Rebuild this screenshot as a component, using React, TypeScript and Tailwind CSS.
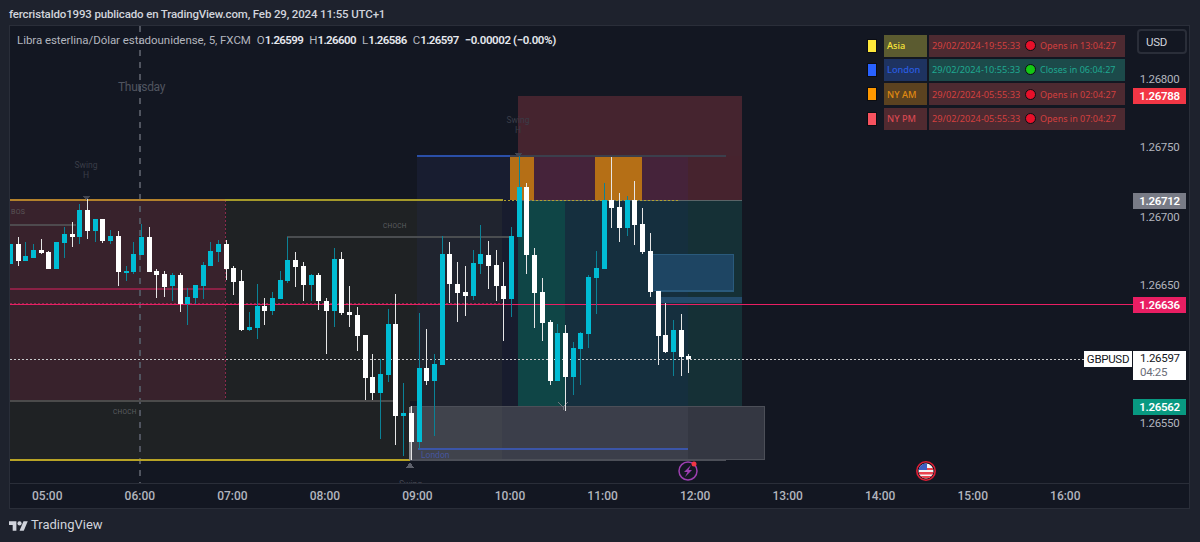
import React from "react"

type Candle = ["c" | "w", number, number, number, number]

// kind, wick top, body top, body bottom, wick bottom (page px)
const candles: Candle[] = [
  ["c", 244, 244, 264, 264], ["w", 237, 244, 261, 266], ["c", 242, 256, 261, 261], ["c", 244, 250, 258, 258],
  ["w", 239, 250, 253, 254], ["w", 251, 252, 269, 269], ["c", 242, 242, 269, 269], ["c", 227, 234, 243, 258],
  ["w", 222, 234, 237, 247], ["c", 204, 210, 237, 244], ["w", 199, 210, 231, 239], ["c", 219, 219, 231, 242],
  ["w", 219, 219, 241, 243], ["c", 230, 236, 241, 244], ["w", 231, 236, 272, 286], ["c", 266, 271, 273, 281],
  ["c", 242, 254, 272, 274], ["c", 224, 237, 255, 255], ["w", 227, 237, 272, 272], ["w", 269, 271, 275, 298],
  ["w", 271, 274, 287, 297], ["c", 273, 275, 286, 301], ["w", 273, 275, 304, 312], ["c", 288, 297, 304, 325],
  ["c", 285, 285, 298, 304], ["c", 262, 265, 286, 299], ["c", 242, 251, 266, 266], ["c", 240, 244, 252, 262],
  ["w", 240, 244, 269, 280], ["w", 266, 268, 282, 295], ["w", 270, 281, 330, 331], ["c", 312, 327, 330, 331],
  ["c", 284, 306, 328, 339], ["w", 298, 306, 311, 325], ["c", 292, 298, 311, 315], ["c", 271, 280, 299, 299],
  ["c", 237, 260, 281, 283], ["w", 252, 260, 267, 287], ["w", 262, 266, 285, 301], ["c", 274, 275, 285, 301],
  ["w", 273, 275, 301, 310], ["w", 298, 301, 311, 354], ["c", 248, 259, 311, 327], ["w", 252, 259, 313, 315],
  ["w", 286, 312, 315, 327], ["w", 307, 315, 336, 351], ["w", 335, 335, 378, 400], ["w", 354, 377, 393, 400],
  ["c", 359, 374, 393, 439], ["c", 309, 324, 375, 382], ["w", 294, 324, 416, 445], ["c", 383, 413, 416, 456],
  ["w", 406, 413, 442, 460], ["c", 313, 368, 442, 449], ["w", 329, 368, 381, 385], ["c", 354, 364, 381, 436],
  ["c", 236, 254, 365, 365], ["w", 242, 254, 284, 303], ["w", 262, 284, 293, 322], ["w", 266, 292, 296, 316],
  ["c", 250, 263, 296, 300], ["c", 225, 254, 264, 274], ["w", 241, 255, 266, 289], ["w", 250, 265, 286, 301],
  ["w", 262, 286, 299, 341], ["c", 227, 236, 299, 317], ["c", 156, 187, 237, 237], ["w", 183, 187, 255, 274],
  ["w", 248, 255, 293, 328], ["w", 278, 292, 323, 341], ["w", 320, 322, 381, 385], ["c", 324, 333, 381, 381],
  ["w", 325, 333, 377, 411], ["c", 342, 348, 377, 395], ["c", 332, 333, 349, 385], ["c", 275, 277, 334, 348],
  ["c", 251, 268, 278, 314], ["c", 183, 200, 269, 269], ["w", 157, 200, 208, 228], ["w", 193, 207, 228, 242],
  ["c", 196, 200, 228, 236], ["w", 181, 200, 225, 245], ["w", 208, 224, 252, 254], ["w", 233, 251, 292, 297],
  ["w", 291, 291, 336, 365], ["w", 303, 335, 352, 353], ["c", 320, 330, 352, 376], ["w", 314, 330, 357, 376],
  ["w", 354, 356, 359, 373],
]

const zones: [number, number, number, number, string][] = [
  [10, 200, 215, 201, "#38222c"],
  [225, 200, 192, 201, "#1f2224"],
  [10, 401, 400, 59, "#1f2224"],
  [417, 200, 85, 207, "#20242f"],
  [502, 200, 16, 207, "#181c2e"],
  [417, 156, 93, 44, "#181d30"],
  [518, 96, 224, 60, "#45242f"],
  [510, 156, 178, 44, "#45233a"],
  [688, 156, 54, 44, "#46232e"],
  [510, 157, 24, 43, "#b56f16"],
  [595, 157, 47, 43, "#b56f16"],
  [518, 201, 47, 206, "#0f4546"],
  [565, 201, 123, 206, "#152f3e"],
  [688, 201, 54, 206, "#153036"],
  [652, 254, 82, 37, "#1e4563"],
  [660, 297, 82, 6, "#234b6b"],
  [410, 407, 92, 53, "#40434c"],
  [502, 407, 186, 53, "#3b3e4a"],
  [688, 407, 77, 53, "#343742"],
]

function ChartDrawing() {
  return (
    <svg className="absolute inset-0 h-full w-full" viewBox="10 26 1123 457" shapeRendering="crispEdges">
      {zones.map(([x, y, w, h, fill], i) => (
        <rect key={i} x={x} y={y} width={w} height={h} fill={fill} />
      ))}
      <rect x="652.5" y="254.5" width="81" height="36" fill="none" stroke="#2a5a7c" />
      <path d="M660 291h74" stroke="#2a5a7c" fill="none" />
      <rect x="410.5" y="406.5" width="354" height="53" fill="none" stroke="#4c4f58" />
      <path d="M410 460h316" stroke="#4c4f58" fill="none" strokeWidth="2" />

      <path d="M225 200v201M10 401h215" stroke="#8b2a4c" strokeDasharray="2 2" fill="none" />
      <path d="M140 26V483" stroke="#50545f" strokeWidth="2" strokeDasharray="6 6" fill="none" />

      <rect x="10" y="199" width="215" height="2" fill="#b3812c" />
      <rect x="225" y="199" width="278" height="2" fill="#a59a2a" />
      <rect x="518" y="200" width="224" height="1" fill="#5a6468" />
      <path d="M500 200h180" stroke="#b0a030" strokeDasharray="2 2" fill="none" />
      <rect x="417" y="155" width="93" height="2" fill="#2a4fa8" />
      <rect x="510" y="155" width="216" height="2" fill="#3b3f4c" />
      <rect x="10" y="224" width="66" height="2" fill="#4e4a4e" />
      <rect x="287" y="236" width="223" height="2" fill="#4a4d50" />
      <rect x="10" y="400" width="383" height="2" fill="#4b4b4b" />
      <rect x="10" y="459" width="400" height="2" fill="#b8a326" />
      <rect x="418" y="448" width="270" height="2" fill="#3b55a8" />
      <rect x="409" y="407" width="2" height="53" fill="#8a8c90" />

      <rect x="10" y="288" width="215" height="2" fill="#8a2145" />
      <path d="M10 303h493" stroke="#8b2a4c" strokeDasharray="2 2" fill="none" />
      <rect x="10" y="304" width="1123" height="1" fill="#e91e63" />
      <path d="M10 359H1085" stroke="#c9cacc" strokeDasharray="2 2" fill="none" />

      <polygon points="83,196 90,196 86.5,200" fill="#434651" />
      <polygon points="515,153 522,153 518.5,157" fill="#434651" />
      <polygon points="406,468 414,468 410,462" fill="#5d606b" />
      <path d="M558 402l5 5 5-5M563 407v3" stroke="#70747d" fill="none" />

      {candles.map(([kind, top, open, close, bottom], i) => {
        const x = Math.round(9.9 + 7.71 * i)
        const body = kind === "c" ? "#00bcd4" : "#ffffff"
        const wick = kind === "c" ? "#0b8296" : "#e6e6e6"
        return (
          <g key={i}>
            <rect x={x} y={top} width="1" height={bottom - top} fill={wick} />
            <rect x={x - 2} y={open} width="5" height={close - open} fill={body} />
          </g>
        )
      })}
      <rect x="686" y="356" width="5" height="3" fill="#ffffff" />
    </svg>
  )
}

const sessions = [
  { name: "Asia", swatch: "bg-[#ffe83b]", cell: "bg-[#5b5b30] text-[#f8e339]", time: "29/02/2024-19:55:33", left: "Opens in 13:04:27", open: false },
  { name: "London", swatch: "bg-[#2962ff]", cell: "bg-[#1e3360] text-[#2a5ce0]", time: "29/02/2024-10:55:33", left: "Closes in 06:04:27", open: true },
  { name: "NY AM", swatch: "bg-[#ff9800]", cell: "bg-[#5b4220] text-[#e08a10]", time: "29/02/2024-05:55:33", left: "Opens in 02:04:27", open: false },
  { name: "NY PM", swatch: "bg-[#f7525f]", cell: "bg-[#502a30] text-[#d84850]", time: "29/02/2024-05:55:33", left: "Opens in 07:04:27", open: false },
]

function SessionTable() {
  return (
    <div className="absolute left-[857px] top-[8.7px] flex flex-col gap-[2.3px] font-['Noto_Sans',sans-serif] text-[9.2px] leading-none">
      {sessions.map((s) => (
        <div key={s.name} className="flex h-[22px] items-center">
          <div className={"h-[14px] w-[10px] border border-[#0b0d12] " + s.swatch} />
          <div className={"ml-[7px] flex h-full w-[43px] items-center pl-[3px] font-medium " + s.cell}>{s.name}</div>
          <div
            className={
              "ml-[2px] flex h-full w-[196px] items-center pl-[3px] " +
              (s.open ? "bg-[#1c4a4a] text-[#1fa890]" : "bg-[#4d2a31] text-[#d2403f]")
            }
          >
            <span className="w-[93px]">{s.time}</span>
            <span
              className={
                "h-[11px] w-[11px] rounded-full border border-[#0b0d12] " + (s.open ? "bg-[#14c814]" : "bg-[#e8102a]")
              }
            />
            <span className="ml-[4px] text-[9px]">{s.left}</span>
          </div>
        </div>
      ))}
    </div>
  )
}

function EventBolt() {
  return (
    <svg className="absolute left-[667px] top-[434px] h-[22px] w-[22px]" viewBox="0 0 22 22">
      <circle cx="11" cy="11" r="9" fill="none" stroke="#9c3fb0" strokeWidth="1.5" />
      <path d="M14 5l-7 7h3.5l-2.5 5 7-7h-3.5z" fill="#9c3fb0" />
      <circle cx="17" cy="4" r="2.5" fill="#f23645" />
    </svg>
  )
}

function EventFlag() {
  return (
    <svg className="absolute left-[905px] top-[434px] h-[22px] w-[22px]" viewBox="0 0 22 22">
      <clipPath id="flag">
        <circle cx="11" cy="11" r="7.5" />
      </clipPath>
      <circle cx="11" cy="11" r="9.2" fill="#131722" stroke="#e01e35" strokeWidth="1.6" />
      <g clipPath="url(#flag)">
        <rect x="3" y="3" width="16" height="16" fill="#f5f5f5" />
        <rect x="3" y="8" width="16" height="2" fill="#e8434f" />
        <rect x="3" y="12" width="16" height="2.5" fill="#e8434f" />
        <rect x="3" y="16" width="16" height="3" fill="#e8434f" />
        <rect x="3" y="3" width="9" height="7" fill="#3d5fc4" />
      </g>
    </svg>
  )
}

function PriceAxis() {
  const levels = [
    { label: "1.26800", top: 45 },
    { label: "1.26750", top: 113 },
    { label: "1.26700", top: 183 },
    { label: "1.26650", top: 251 },
    { label: "1.26550", top: 389 },
  ]
  const tags = [
    { label: "1.26788", top: 62, color: "bg-[#f23645]" },
    { label: "1.26712", top: 167, color: "bg-[#787b86]" },
    { label: "1.26636", top: 271, color: "bg-[#e91e63]" },
    { label: "1.26562", top: 373, color: "bg-[#089981]" },
  ]
  return (
    <div className="relative w-[56px] shrink-0 text-[11.5px] leading-[16px] tracking-[-0.3px]">
      <div className="absolute left-[4px] top-[3px] flex h-[25px] w-[50px] items-center rounded-[4px] border-2 border-[#2a2e39] pl-[7px] text-[#d1d4dc]">
        USD
      </div>
      {levels.map((l) => (
        <div key={l.label} className="absolute left-0 w-[53px] text-center text-[#b2b5be]" style={{ top: l.top }}>
          {l.label}
        </div>
      ))}
      {tags.map((t) => (
        <div
          key={t.label}
          className={"absolute left-0 h-[16px] w-[53px] text-center font-semibold text-white " + t.color}
          style={{ top: t.top }}
        >
          {t.label}
        </div>
      ))}
      <div className="absolute left-0 top-[325px] flex h-[29px] w-[53px] flex-col bg-white pl-[7px] text-[#131722]">
        <div className="h-[15px] leading-[15px]">1.26597</div>
        <div className="h-[14px] leading-[13px] text-[#6a6d78]">04:25</div>
      </div>
      <div className="absolute left-[-49px] top-[325px] h-[16px] w-[48px] bg-white text-center text-[#131722]">GBPUSD</div>
    </div>
  )
}

const hours = ["05:00", "06:00", "07:00", "08:00", "09:00", "10:00", "11:00", "12:00", "13:00", "14:00", "15:00", "16:00"]

export default function App() {
  return (
    <div className="flex h-[542px] w-[1200px] flex-col overflow-hidden bg-[#1e222d] font-['Roboto',sans-serif] text-[#d1d4dc]">
      <div className="flex h-[25px] shrink-0 items-center pl-[9px] pt-[4px] text-[11.5px] font-medium tracking-[-0.15px]">
        fercristaldo1993 publicado en TradingView.com, Feb 29, 2024 11:55 UTC+1
      </div>
      <div className="ml-[9px] mr-[10px] flex h-[484px] shrink-0 flex-col border border-[#2a2e39] bg-[#131722]">
        <div className="flex flex-1">
          <div className="relative flex-1 overflow-hidden">
            <ChartDrawing />
            <div className="absolute left-[7px] top-[6px] flex gap-[6px] text-[11.5px] leading-[16px]">
              <span className="tracking-[-0.05px] text-[#b2b5be]">Libra esterlina/Dólar estadounidense, 5, FXCM</span>
              <span className="text-[#b2b5be]">O<b className="font-semibold tracking-[-0.6px] text-[#e6e8ee]">1.26599</b></span>
              <span className="text-[#b2b5be]">H<b className="font-semibold tracking-[-0.6px] text-[#e6e8ee]">1.26600</b></span>
              <span className="text-[#b2b5be]">L<b className="font-semibold tracking-[-0.6px] text-[#e6e8ee]">1.26586</b></span>
              <span className="text-[#b2b5be]">C<b className="font-semibold tracking-[-0.6px] text-[#e6e8ee]">1.26597</b></span>
              <span className="font-semibold tracking-[-0.4px] text-[#e6e8ee]">−0.00002 (−0.00%)</span>
            </div>
            <div className="absolute left-[108px] top-[53px] text-[12px] leading-[16px] tracking-[-0.3px] text-[#50545f]">Thursday</div>
            <div className="absolute left-[63px] top-[134px] w-[26px] text-center text-[8.5px] leading-[10px] text-[#3a3d48]">Swing<br />H</div>
            <div className="absolute left-[495px] top-[89px] w-[26px] text-center text-[8.5px] leading-[10px] text-[#3a3d48]">Swing<br />H</div>
            <div className="absolute left-[389px] top-[453px] text-[8.5px] leading-[10px] text-[#434651]">Swing</div>
            <div className="absolute left-[1px] top-[182px] text-[7px] leading-[8px] tracking-[0.3px] text-[#5a5558]">BOS</div>
            <div className="absolute left-[373px] top-[196px] text-[6.5px] leading-[8px] tracking-[0.3px] text-[#5c5f62]">CHOCH</div>
            <div className="absolute left-[103px] top-[382px] text-[6.5px] leading-[8px] tracking-[0.3px] text-[#5c5f62]">CHOCH</div>
            <div className="absolute left-[411px] top-[424px] text-[8.5px] leading-[10px] text-[#46569e]">London</div>
            <SessionTable />
            <EventBolt />
            <EventFlag />
          </div>
          <PriceAxis />
        </div>
        <div className="flex h-[25px] shrink-0 items-center border-t border-[#2a2e39] text-[12px] font-medium text-[#b2b5be]">
          <div className="-ml-[9px] flex">
            {hours.map((h) => (
              <div key={h} className="w-[92.55px] text-center">
                {h}
              </div>
            ))}
          </div>
        </div>
      </div>
      <div className="flex flex-1 items-center pb-[1px] pl-[9px] text-[13px] text-[#d1d4dc]">
        <svg viewBox="0 0 36 24" className="mr-[3px] h-[13px] w-[19px]" fill="#d1d4dc">
          <path d="M14 22H7V11H0V4h14v18z" />
          <path d="M28 22h-8l7.5-18h8L28 22z" />
          <circle cx="20" cy="8" r="4" />
        </svg>
        TradingView
      </div>
    </div>
  )
}
